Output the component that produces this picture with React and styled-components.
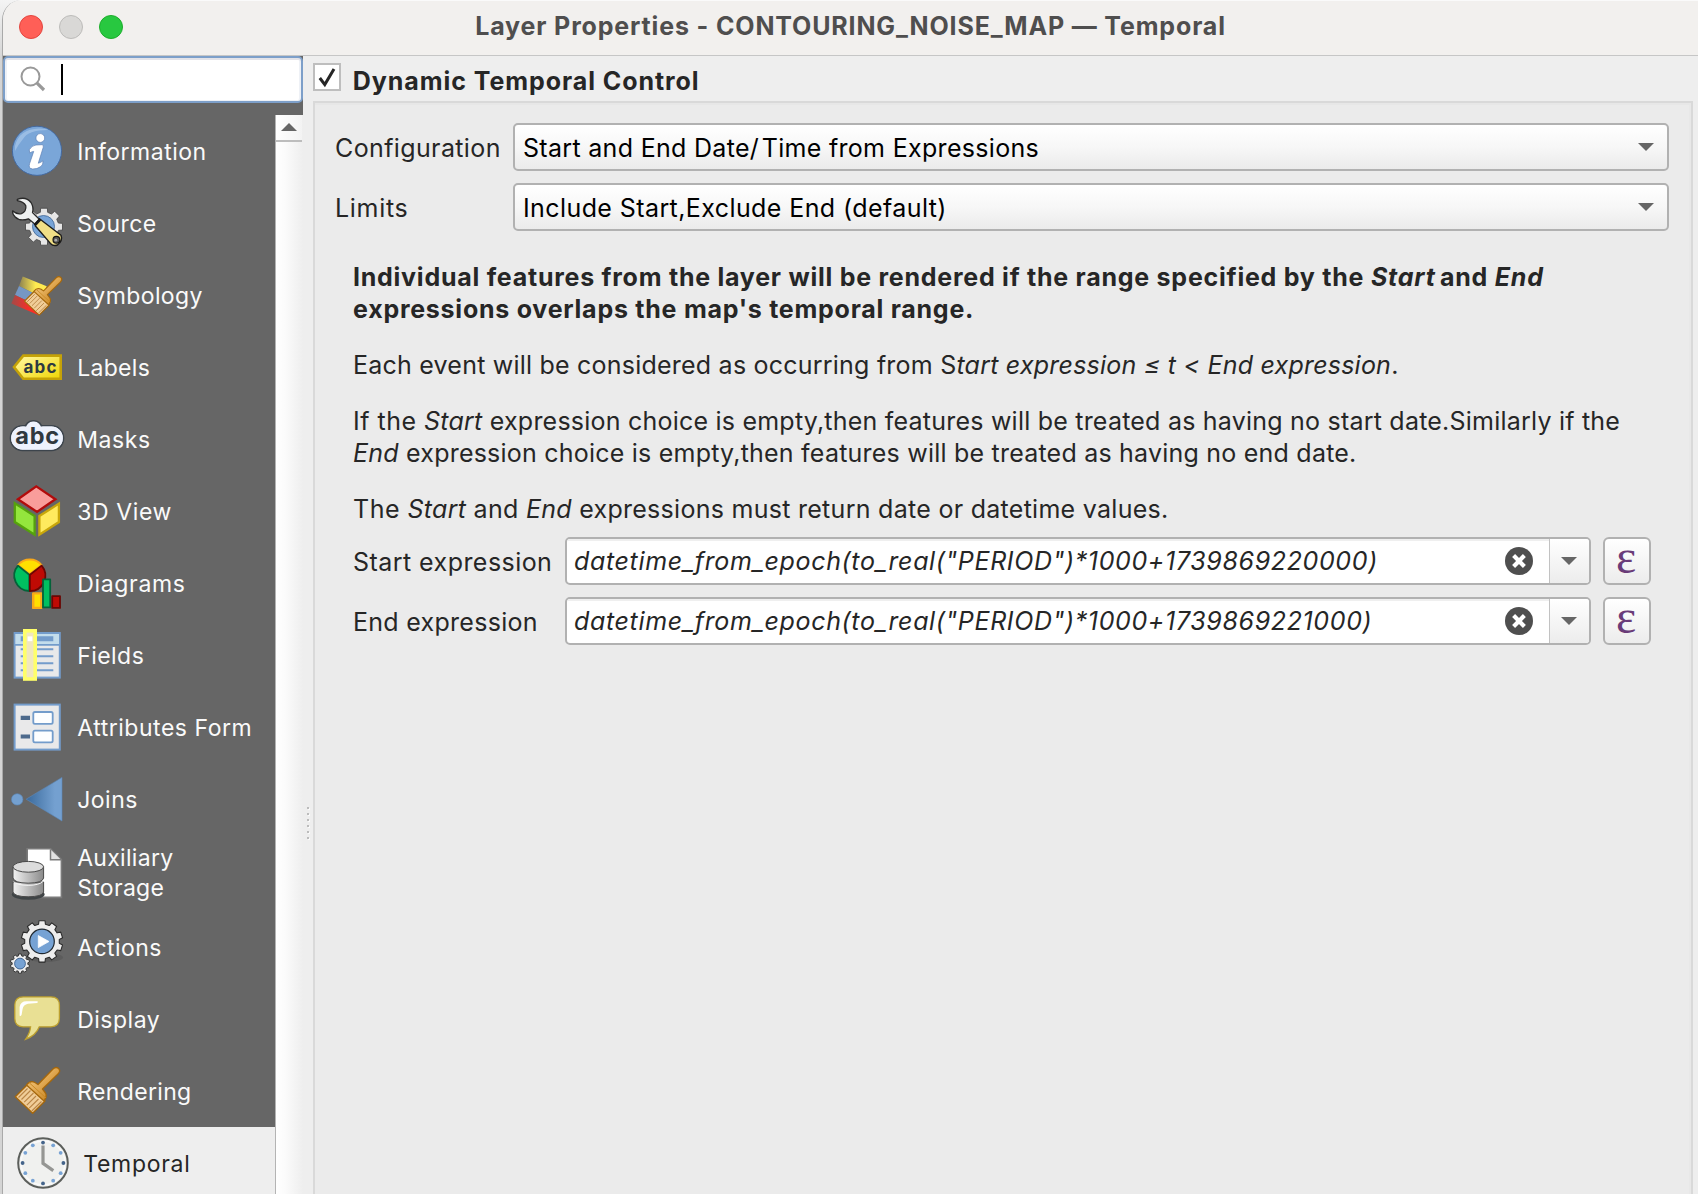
import React from "react";
import styled, { createGlobalStyle } from "styled-components";

const GlobalStyle = createGlobalStyle`
  * { box-sizing: border-box; }
  body { margin: 0; background: #d2d2d2; overflow: hidden; }
`;

const Desktop = styled.div`
  width: 1698px;
  height: 1194px;
  padding-left: 2px;
  overflow: hidden;
  background: linear-gradient(#f4f4f4, #d4d4d4 60px);
  font-family: Inter, "Liberation Sans", sans-serif;
  font-size: 25px;
  color: #262626;
  white-space: pre;
`;

const Window = styled.div`
  display: flex;
  flex-direction: column;
  height: 1194px;
  border-left: 1px solid #a9a9a9;
  border-top-left-radius: 20px;
  overflow: hidden;
  background: #eeeeee;
`;

const TitleBar = styled.header`
  display: grid;
  grid-template-columns: 130px 1fr 130px;
  align-items: center;
  flex: none;
  height: 56px;
  padding: 0 0 2px 0;
  background: #f2f0ee;
  border-bottom: 1px solid #c6c6c6;
  border-top: 1px solid #fafafa;
`;

const Lights = styled.div`
  display: flex;
  gap: 16px;
  padding-left: 16px;
`;

const Light = styled.span`
  width: 24px;
  height: 24px;
  border-radius: 50%;
  background: ${(p) => p.$fill};
  border: 1px solid ${(p) => p.$edge};
`;

const Title = styled.h1`
  margin: 0 0 2px;
  font-size: 25px;
  line-height: 32px;
  font-weight: 700;
  letter-spacing: 0.85px;
  text-align: center;
  color: #4f4e4e;
`;

const Body = styled.div`
  display: flex;
  flex: 1;
  min-height: 0;
`;

const Sidebar = styled.aside`
  display: flex;
  flex-direction: column;
  flex: none;
  width: 300px;
  background: #666666;
`;

const Search = styled.div`
  display: flex;
  align-items: center;
  flex: none;
  height: 47px;
  padding: 0 0 2px 14px;
  gap: 13px;
  border: 2px solid #7d9fc9;
  border-radius: 5px;
  background: #ffffff;
  box-shadow: inset 0 2px 0 #e3e3e9, inset 2px 0 0 #eef1f6, inset -2px 0 0 #eef1f6, inset 0 -1px 0 #eef1f6;
`;

const Caret = styled.span`
  width: 2px;
  height: 31px;
  margin-top: 2px;
  background: #000000;
`;

const ListArea = styled.div`
  display: flex;
  flex: 1;
  min-height: 0;
  margin-top: 12px;
`;

const List = styled.nav`
  flex: none;
  width: 272px;
  overflow: hidden;
`;

const Item = styled.div`
  display: flex;
  align-items: center;
  gap: 14.2px;
  height: ${(p) => (p.$tall ? 76 : 72)}px;
  padding-left: ${(p) => (p.$active ? 14 : 8)}px;
  background: ${(p) => (p.$active ? "#eeeeee" : "transparent")};
  color: ${(p) => (p.$active ? "#262626" : "#fafafa")};
`;

const ItemIcon = styled.svg`
  flex: none;
  width: 52px;
  height: 52px;
  overflow: visible;
`;

const ItemLabel = styled.span`
  padding: ${(p) => (p.$tall ? "0 0 1px" : "1px 0 0")};
  font-size: 23px;
  line-height: 30px;
  letter-spacing: ${(p) => p.$track}px;
`;

const ScrollBar = styled.div`
  flex: 1;
  border-left: 1px solid #b4b4b4;
  background: linear-gradient(to right, #ffffff, #fbfbfb 35%, #eeeeee);
`;

const ScrollUp = styled.div`
  display: flex;
  align-items: center;
  justify-content: center;
  height: 27px;
  margin-right: 1px;
  padding: 0 1px 2px 0;
  border-bottom: 2px solid #bdbdbd;
  background: linear-gradient(to right, #ffffff, #f3f3f3);
`;

const Splitter = styled.div`
  display: flex;
  flex-direction: column;
  align-items: center;
  flex: none;
  width: 10px;
  padding-top: 751px;
  gap: 4px;
`;

const Dot = styled.span`
  width: 2px;
  height: 2px;
  background: #bcbcbc;
  box-shadow: 1px 1px 0 #fafafa;
`;

const Main = styled.main`
  display: flex;
  flex-direction: column;
  flex: 1;
  padding-right: 5px;
`;

const GroupHeader = styled.div`
  display: flex;
  gap: 11.8px;
  flex: none;
  height: 45px;
  padding-top: 7px;
`;

const CheckBox = styled.span`
  width: 28px;
  height: 28px;
  border: 2px solid #bebebe;
  background: #ffffff;
`;

const GroupTitle = styled.h2`
  margin: 2px 0 0;
  font-size: 25px;
  line-height: 32px;
  font-weight: 700;
  letter-spacing: 0.94px;
`;

const Group = styled.section`
  flex: 1;
  padding: 20px 22px 0 20px;
  border: solid #d9d9d9;
  border-width: 2px 2px 0;
  background: #ebebeb;
  box-shadow: inset 0 2px 0 #e7e7e7, inset -2px 0 0 #e8e8e8;
`;

const Form = styled.div`
  display: grid;
  grid-template-columns: 178px 1fr;
  grid-auto-rows: 48px;
  row-gap: 12px;
`;

const Label = styled.label`
  display: flex;
  align-items: center;
  padding-top: 1px;
  letter-spacing: ${(p) => p.$track}px;
`;

const Combo = styled.div`
  display: flex;
  align-items: center;
  justify-content: space-between;
  padding: 2px 13px 0 8px;
  border: 2px solid #b1b1b1;
  border-radius: 5px;
  background: linear-gradient(#ffffff, #f7f7f7 50%, #ebebeb);
  color: #000000;
  letter-spacing: ${(p) => p.$track}px;

  svg {
    margin-bottom: 2px;
  }
`;

const Tight = styled.span`
  letter-spacing: -4.5px;
`;

const Help = styled.div`
  padding: 30px 0 12px 18px;
  line-height: 32px;
`;

const Paragraph = styled.p`
  margin: 0 0 ${(p) => (p.$last ? 0 : 24)}px;
  font-weight: ${(p) => (p.$bold ? 700 : 400)};
  letter-spacing: ${(p) => p.$track}px;
`;

const Lead = styled.span`
  letter-spacing: 0.5px;
`;

const HalfSpace = styled.span`
  letter-spacing: -1.5px;
`;

const ExpressionForm = styled.div`
  display: grid;
  grid-template-columns: 212px 1fr 48px;
  grid-auto-rows: 48px;
  row-gap: 12px;
  padding: 0 18px 0 18px;
`;

const ExpressionBox = styled.div`
  display: flex;
  margin-right: 12px;
  border: 2px solid #b1b1b1;
  border-radius: 5px;
  background: #ffffff;
  overflow: hidden;
`;

const ExpressionText = styled.span`
  flex: 1;
  padding-left: 7px;
  line-height: 44px;
  font-style: italic;
  letter-spacing: 0.64px;
  box-shadow: inset 0 2px 0 #efefef;
`;

const ClearButton = styled.span`
  display: flex;
  align-items: center;
  padding-right: 16px;
  box-shadow: inset 0 2px 0 #efefef;
`;

const DropButton = styled.span`
  display: flex;
  align-items: center;
  justify-content: center;
  width: 40px;
  padding-right: 2px;
  border-left: 1px solid #c2c2c2;
  background: linear-gradient(#ffffff, #ececec);
`;

const EpsilonButton = styled.button`
  display: flex;
  justify-content: center;
  padding: 2px 2px 0 0;
  border: 2px solid #b1b1b1;
  border-radius: 6px;
  background: linear-gradient(#ffffff, #ececec);
  color: #6a3c79;
  font: 48px/31px "Liberation Serif", serif;
`;

const gear = (cx, cy, outer, inner, teeth) => {
  const pts = [];
  const step = (Math.PI * 2) / teeth;
  for (let k = 0; k < teeth; k++) {
    const a = k * step + step / 2;
    [[-0.32, inner], [-0.23, outer], [0.23, outer], [0.32, inner]].forEach(([t, r]) => {
      pts.push(`${(cx + r * Math.cos(a + t * step)).toFixed(2)},${(cy + r * Math.sin(a + t * step)).toFixed(2)}`);
    });
  }
  return pts.join(" ");
};

const Brush = ({ transform }) => (
  <g transform={transform} strokeLinejoin="round">
    <path d="M17 19 L4.3 31.7 L21.7 48.3 L34 36 Z" fill="#f0cd98" stroke="#a5670c" strokeWidth="1.4" />
    <path d="M16.5 23.5 L7.5 32.5 M19.5 25.5 L10.5 34.5 M22.5 28 L13.2 37.2 M25 31 L15.8 40.2 M27.5 34 L18.2 43.2 M30.5 36.5 L20.8 46" stroke="#b98546" strokeWidth="1.1" />
    <path d="M15.5 20 Q19 15 24 17.5 L27 19.5 L42 4 Q45 1.2 47.6 3.5 Q50 6 47 9 L31.5 24 L34.5 28 Q36.5 31 33 36 Z" fill="url(#wood)" stroke="#a5670c" strokeWidth="1.3" />
    <path d="M18 17.5 L35 33" stroke="#c98a25" strokeWidth="1" />
  </g>
);

const Defs = () => (
  <defs>
    <linearGradient id="wood" x1="0" y1="0" x2="1" y2="1"><stop offset="0.35" stopColor="#e9b564" /><stop offset="1" stopColor="#bd7408" /></linearGradient>
  </defs>
);

const icons = {
  info: (
    <>
      <circle cx="26" cy="25.8" r="24.6" fill="#7aa6d8" stroke="#44699f" strokeWidth="1" />
      <path d="M4 21 Q8 4 28 3.4 Q36 3.5 37 5 Q17 5 12 14 Q7 20 4 26 Z" fill="#a5c4e8" opacity=".75" />
      <circle cx="29.3" cy="13" r="4.4" fill="#fff" stroke="#5d7fb5" strokeWidth=".7" />
      <path d="M18.2 24.8 Q21 20.2 25 20 L31 19.7 Q33 19.8 32.2 22.5 L27.3 38.2 Q29.5 37.8 32 35.8 Q32.4 39.6 29.8 41.6 Q26 44.3 21.5 44 Q17 43.4 18.6 38.6 L22.7 26.4 Q20.7 26.6 18.8 28 Z" fill="#fff" stroke="#5d7fb5" strokeWidth=".7" />
    </>
  ),
  source: (
    <>
      <polygon points={gear(33, 29.7, 18.8, 14.8, 8)} fill="#e6e6e6" stroke="#4a4a4a" strokeWidth=".8" transform="rotate(22.5 33 29.7)" />
      <circle cx="32.5" cy="29.5" r="11" fill="#78a5d8" stroke="#3d6494" strokeWidth=".8" />
      <path d="M6.3 2.4 Q15 -1 20 5.5 Q23 10.5 21.5 15.5 L28.3 22.2 L23.8 27 L17.4 21.8 Q9 24.8 4.2 20 Q1.2 17 1.6 13.8 Q5.5 17.6 10.5 16.6 Q15.6 14 14.8 8.8 Q13 4.8 6.3 3.6 Z" fill="#eef0f0" stroke="#2a2a2a" strokeWidth="1.3" strokeLinejoin="round" />
      <path d="M28.6 20.8 L22.8 27.4 L24.4 28.8 L30.2 22.4 Z" fill="#111" />
      <path d="M29.8 22.8 L50 38.2 Q52 43.5 46.5 48 Q42.5 49.6 39.4 46.4 L24.2 28.8 Z" fill="#f0df86" stroke="#1c1c1c" strokeWidth="1.4" strokeLinejoin="round" />
      <circle cx="45.4" cy="42.8" r="3.4" fill="#555" stroke="#111" strokeWidth="1.1" />
      <circle cx="44.8" cy="43.2" r="1.4" fill="#aaa" />
    </>
  ),
  symbology: (
    <>
      <defs>
        <linearGradient id="fy"><stop offset="0" stopColor="#8c8150" /><stop offset=".6" stopColor="#ffea50" /></linearGradient>
        <linearGradient id="fr"><stop offset="0" stopColor="#a34a48" /><stop offset=".7" stopColor="#fb2d26" /></linearGradient>
      </defs>
      <path d="M11.7 7.5 L35.7 17.3 L32 29 L8 17 Z" fill="url(#fy)" />
      <path d="M8 17 L32 29 L29 38 L4 26 Z" fill="#7597c4" />
      <path d="M4 26 L27 37 L27.3 46 L.3 34.6 Z" fill="url(#fr)" />
      <Brush transform="translate(9.9 5.5) scale(.84)" />
    </>
  ),
  labels: (
    <>
      <defs><linearGradient id="tag" x1="0" y1="0" x2="1" y2="1"><stop offset=".2" stopColor="#fff38a" /><stop offset="1" stopColor="#efd500" /></linearGradient></defs>
      <path d="M3 26 L12.3 14.6 H49.7 V37.8 H12.3 Z" fill="url(#tag)" stroke="#c5a207" strokeWidth="2.6" />
      <text x="12.4" y="31.7" textLength="33" fontSize="17" fontWeight="700" fill="#2d3a42">abc</text>
    </>
  ),
  masks: (
    <>
      <g fill="#eef2fd" stroke="#3c444c" strokeWidth="1.6">
        <rect x="-.5" y="12.8" width="53" height="24.6" rx="12" />
        <rect x="14" y="7.8" width="17" height="20" rx="8" />
      </g>
      <rect x=".2" y="13.5" width="51.6" height="23.2" rx="11.4" fill="#eef2fd" />
      <text x="4.2" y="31.3" textLength="44" fontSize="23.5" fontWeight="700" fill="#30383f">abc</text>
    </>
  ),
  view3d: (
    <g strokeWidth="2.3">
      <path d="M25.3 1.4 L44.4 14.3 L26 26.9 L6.9 14.3 Z" fill="#f99d9b" stroke="#b20b0b" />
      <path d="M3.8 18.2 L23.6 31 V49.6 L3.8 37 Z" fill="#94e63d" stroke="#55a20c" />
      <path d="M47.9 18.6 L28.4 31 V49.6 L47.9 37 Z" fill="#ffea5e" stroke="#c8a60b" />
    </g>
  ),
  diagrams: (
    <g strokeWidth="1.8" strokeLinejoin="round">
      <path d="M18.5 17 L7 8 A15.4 15.4 0 0 1 30.6 8 Z" fill="#ffe000" stroke="#f9a919" />
      <path d="M18.3 17.8 L7 8.6 A15.4 15.4 0 0 0 18.3 34 Z" fill="#00c060" stroke="#04633a" />
      <path d="M18.9 17.8 L30.6 8.6 A15.4 15.4 0 0 1 18.9 34 Z" fill="#bf0a04" stroke="#6a0603" />
      <rect x="22.2" y="36.4" width="8" height="14.5" fill="#ffe000" stroke="#f9a919" strokeWidth="2.4" />
      <rect x="32" y="22.4" width="7.2" height="28" fill="#00c060" stroke="#04633a" />
      <rect x="41.2" y="39.2" width="7.8" height="11.7" fill="#bf0a04" stroke="#6a0603" />
    </g>
  ),
  fields: (
    <>
      <rect x="3.6" y="4" width="45.2" height="44.6" fill="#e8e9ea" stroke="#739ccb" strokeWidth="2" />
      <rect x="4.6" y="5" width="43.2" height="10" fill="#c3ddec" />
      <path d="M3.6 15.8 H48.8" stroke="#739ccb" strokeWidth="1.8" />
      <path d="M9.7 9.7 H42.3" stroke="#739ccb" strokeWidth="5" />
      <path d="M9.7 20.2 H42.3 M9.7 27.2 H42.3 M9.7 34.2 H42.3 M9.7 41.2 H42.3" stroke="#739ccb" strokeWidth="2" />
      <rect x="13.8" y="1.8" width="10.4" height="48.2" fill="#f0e7bf" stroke="#ffff6a" strokeWidth="3.6" />
      <rect x="16.6" y="7.4" width="4.8" height="4.8" fill="#fff" />
    </>
  ),
  form: (
    <>
      <rect x="3.6" y="3.6" width="45.2" height="45" fill="#e9e9ea" stroke="#739ccb" strokeWidth="2" />
      <g fill="#fdfeff" stroke="#739ccb" strokeWidth="1.8">
        <rect x="22.3" y="11" width="19.4" height="11.8" rx="1.6" />
        <rect x="22.3" y="29.6" width="19.4" height="11.8" rx="1.6" />
      </g>
      <path d="M9.7 16.9 H19 M9.7 35.5 H19" stroke="#4d6a8c" strokeWidth="4.2" />
    </>
  ),
  joins: (
    <>
      <defs><linearGradient id="join"><stop offset="0" stopColor="#3a6a9c" /><stop offset=".8" stopColor="#74a0d0" /></linearGradient></defs>
      <circle cx="6.2" cy="26.4" r="5.7" fill="#74a0d0" stroke="#5a88bb" strokeWidth=".6" />
      <path d="M15.2 26.2 L51 4.4 V48 Z" fill="url(#join)" stroke="#5a88bb" strokeWidth=".6" />
    </>
  ),
  storage: (
    <>
      <defs><linearGradient id="cyl"><stop offset="0" stopColor="#f2f2f2" /><stop offset="1" stopColor="#8a8a8a" /></linearGradient></defs>
      <path d="M16.2 1.8 H39.5 L50.4 12.6 V50.4 H16.2 Z" fill="#fff" stroke="#7b7b7b" strokeWidth="1.6" />
      <path d="M39.5 2.4 V12.8 H50" fill="#e2e2e2" stroke="#7b7b7b" strokeWidth="1.5" />
      <ellipse cx="17.2" cy="47.4" rx="16.4" ry="5.4" fill="#3f4446" />
      <path d="M2 35 V45 Q3 49.6 17.2 49.8 Q31.6 49.6 32.6 45 V35 Z" fill="url(#cyl)" stroke="#4a4a4a" strokeWidth="1" />
      <path d="M2 19.8 V31 Q3 36 17.2 36.2 Q31.6 36 32.6 31 V19.8 Z" fill="url(#cyl)" stroke="#4a4a4a" strokeWidth="1" />
      <path d="M2.6 34.6 Q6 38.2 17.2 38.4 Q28 38.2 32 34.6" fill="none" stroke="#f4f4f4" strokeWidth="1" />
      <ellipse cx="17.3" cy="19.8" rx="15.3" ry="5.4" fill="#dcdcdc" stroke="#4a4a4a" strokeWidth="1" />
    </>
  ),
  actions: (
    <>
      <ellipse cx="34" cy="36.5" rx="18" ry="4.5" fill="#555" opacity=".6" />
      <polygon points={gear(31, 20.4, 20.9, 17.4, 10)} fill="#ededed" stroke="#2b2b2b" strokeWidth="1.1" strokeLinejoin="round" />
      <circle cx="31" cy="20.4" r="12.3" fill="#76a2d4" stroke="#20282f" strokeWidth="1.2" />
      <path d="M27.3 14.6 L38 20.5 L27.3 26.6 Z" fill="#fff" stroke="#fff" strokeWidth=".8" strokeLinejoin="round" />
      <polygon points={gear(9, 42.6, 9.7, 7.9, 10)} fill="#ededed" stroke="#2b2b2b" strokeWidth=".9" strokeLinejoin="round" />
      <circle cx="9" cy="42.6" r="5.4" fill="#76a2d4" stroke="#3b5f8c" strokeWidth=".9" />
    </>
  ),
  display: (
    <>
      <path d="M12 3.9 H40 Q48.4 4 48.4 12 V25.5 Q48.2 33.6 40 33.8 H28.3 Q25 42.5 14.6 46.3 Q19 40 19.6 33.8 H12 Q3.8 33.6 3.8 25.5 V12 Q4 4 12 3.9 Z" fill="#e9e094" stroke="#bda02f" strokeWidth="1.3" />
      <path d="M8.6 22.4 V14 Q9.5 8.2 15.5 8.2 H26.5 Q27.6 9.4 26 10 L17 10.8 Q12.4 11.6 11.6 16 L10.6 21.8 Q9.5 24 8.6 22.4 Z" fill="#fff" />
    </>
  ),
  rendering: <Brush />,
  temporal: (
    <>
      <circle cx="26" cy="26" r="24.8" fill="#f0f1ef" stroke="#5b5e5b" strokeWidth="2" />
      <circle cx="26" cy="26" r="22" fill="none" stroke="#fafafa" strokeWidth="1.5" />
      {Array.from({ length: 12 }, (_, k) => (
        <circle
          key={k}
          cx={26 + 20.4 * Math.sin((k * Math.PI) / 6)}
          cy={26 - 20.4 * Math.cos((k * Math.PI) / 6)}
          r="1.9"
          fill={k % 3 ? "#78a3d4" : "#44648a"}
        />
      ))}
      <path d="M26 8.4 V26.4 L36.3 33.6" fill="none" stroke="#959693" strokeWidth="3.2" />
    </>
  ),
};

const items = [
  { icon: "info", label: "Information", track: 0.5 },
  { icon: "source", label: "Source", track: 0.4 },
  { icon: "symbology", label: "Symbology", track: 0.4 },
  { icon: "labels", label: "Labels", track: 0.3 },
  { icon: "masks", label: "Masks", track: 0.6 },
  { icon: "view3d", label: "3D View", track: 0.6 },
  { icon: "diagrams", label: "Diagrams", track: 0.68 },
  { icon: "fields", label: "Fields", track: 0.45 },
  { icon: "form", label: "Attributes Form", track: 0.53 },
  { icon: "joins", label: "Joins", track: 0.5 },
  { icon: "storage", label: "Auxiliary\nStorage", track: 0.3, tall: true },
  { icon: "actions", label: "Actions", track: 0.45 },
  { icon: "display", label: "Display", track: 0.5 },
  { icon: "rendering", label: "Rendering", track: 0.35 },
  { icon: "temporal", label: "Temporal", track: 0.7, active: true },
];

const Arrow = ({ up }) => (
  <svg width="16" height="8" viewBox="0 0 16 8">
    <path d={up ? "M0 8 L8 0 L16 8 Z" : "M0 0 H16 L8 8 Z"} fill="#666" />
  </svg>
);

const ClearIcon = () => (
  <svg width="28" height="28" viewBox="0 0 28 28">
    <circle cx="14" cy="14" r="14" fill="#4f4f4f" />
    <path d="M8.6 8.6 L19.4 19.4 M19.4 8.6 L8.6 19.4" stroke="#fff" strokeWidth="4.2" />
  </svg>
);

const expressions = [
  { label: "Start expression", track: 0.45, value: 'datetime_from_epoch(to_real("PERIOD")*1000+1739869220000)' },
  { label: "End expression", track: 0.28, value: 'datetime_from_epoch(to_real("PERIOD")*1000+1739869221000)' },
];

export default function App() {
  return (
    <Desktop>
      <GlobalStyle />
      <Window>
        <TitleBar>
          <Lights>
            <Light $fill="#ff5f57" $edge="#e2463f" />
            <Light $fill="#d9d8d6" $edge="#bcbbb9" />
            <Light $fill="#28c840" $edge="#1dad2b" />
          </Lights>
          <Title>Layer Properties - CONTOURING_NOISE_MAP — Temporal</Title>
        </TitleBar>
        <Body>
          <Sidebar>
            <Search>
              <svg width="29" height="28" viewBox="0 0 29 28">
                <circle cx="11.5" cy="11.5" r="9" fill="none" stroke="#999" strokeWidth="2" />
                <path d="M17.8 17.8 L25 25" stroke="#999" strokeWidth="3.2" />
              </svg>
              <Caret />
            </Search>
            <ListArea>
              <List>
                {items.map((it) => (
                  <Item key={it.label} $tall={it.tall} $active={it.active}>
                    <ItemIcon viewBox="0 0 52 52">
                      {it.icon === "symbology" && <Defs />}
                      {icons[it.icon]}
                    </ItemIcon>
                    <ItemLabel $track={it.track} $tall={it.tall}>{it.label}</ItemLabel>
                  </Item>
                ))}
              </List>
              <ScrollBar>
                <ScrollUp><Arrow up /></ScrollUp>
              </ScrollBar>
            </ListArea>
          </Sidebar>
          <Splitter>
            {[0, 1, 2, 3, 4, 5].map((k) => <Dot key={k} />)}
          </Splitter>
          <Main>
            <GroupHeader>
              <CheckBox>
                <svg width="24" height="24" viewBox="0 0 24 24">
                  <path d="M4.8 13 L9.8 19.6 L19 4" fill="none" stroke="#262626" strokeWidth="3" />
                </svg>
              </CheckBox>
              <GroupTitle>Dynamic Temporal Control</GroupTitle>
            </GroupHeader>
            <Group>
              <Form>
                <Label $track={0.38}>Configuration</Label>
                <Combo $track={0.31}>
                  <span>Start and End Date/<Tight> </Tight>Time from Expressions</span>
                  <Arrow />
                </Combo>
                <Label $track={0.7}>Limits</Label>
                <Combo $track={0.41}>
                  <span>Include Start,Exclude End (default)</span>
                  <Arrow />
                </Combo>
              </Form>
              <Help>
                <Paragraph $bold $track={0.75}>
                  Individual features from the layer will be rendered if the range specified by the <em>Start</em><HalfSpace> </HalfSpace>and <em>End</em>
                  {"\n"}expressions overlaps the map's temporal range.
                </Paragraph>
                <Paragraph $track={0.22}>
                  Each event will be considered as occurring from S<em>tart expression ≤ t &lt; End expression</em>.
                </Paragraph>
                <Paragraph $track={0.22}>
                  <Lead>If the </Lead><em>Start</em> expression choice is empty,then features will be treated as having no start date.Similarly if the
                  {"\n"}<em>End</em> expression choice is empty,then features will be treated as having no end date.
                </Paragraph>
                <Paragraph $last $track={0.28}>
                  <Lead>The </Lead><em>Start</em> and <em>End</em> expressions must return date or datetime values.
                </Paragraph>
              </Help>
              <ExpressionForm>
                {expressions.map((e) => (
                  <React.Fragment key={e.label}>
                    <Label $track={e.track}>{e.label}</Label>
                    <ExpressionBox>
                      <ExpressionText>{e.value}</ExpressionText>
                      <ClearButton><ClearIcon /></ClearButton>
                      <DropButton><Arrow /></DropButton>
                    </ExpressionBox>
                    <EpsilonButton>ε</EpsilonButton>
                  </React.Fragment>
                ))}
              </ExpressionForm>
            </Group>
          </Main>
        </Body>
      </Window>
    </Desktop>
  );
}
